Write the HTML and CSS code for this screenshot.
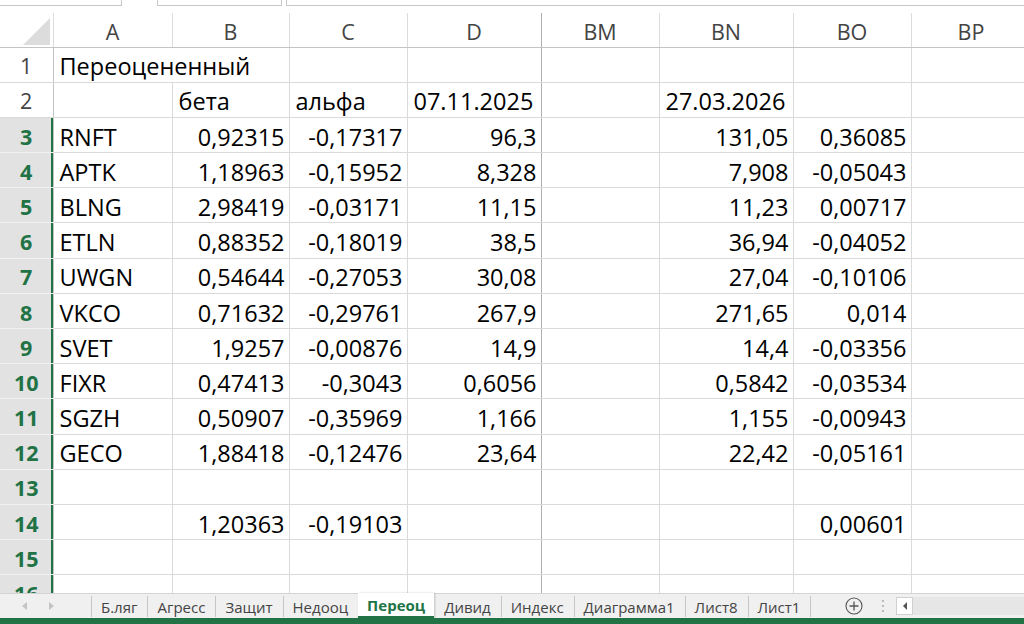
FILE: index.html
```html
<!DOCTYPE html>
<html lang="ru">
<head>
    <meta charset="UTF-8">
    <title>Переоц</title>
    <link rel="stylesheet" href="styles.css">
</head>
<body>
<div class="app">
    <div class="formula-strip">
        <div class="name-box"></div>
        <div class="fx-box"></div>
        <div class="formula-box"></div>
    </div>

    <div class="sheet">
        <table class="grid">
            <colgroup>
                <col class="w-hdr">
                <col class="w-a"><col class="w-b"><col class="w-c"><col class="w-d">
                <col class="w-bm"><col class="w-bn"><col class="w-bo"><col class="w-bp">
            </colgroup>
            <thead>
                <tr>
                    <th class="corner"><svg width="28" height="27" viewBox="0 0 28 27"><polygon points="27,0 27,27 0,27" fill="#dcdcdc"/></svg></th>
                    <th>A</th><th>B</th><th>C</th><th>D</th><th>BM</th><th>BN</th><th>BO</th><th>BP</th>
                </tr>
            </thead>
            <tbody>
                <tr><th>1</th><td class="ov">Переоцененный</td><td></td><td></td><td></td><td></td><td></td><td></td><td></td></tr>
                <tr><th>2</th><td></td><td>бета</td><td>альфа</td><td>07.11.2025</td><td></td><td>27.03.2026</td><td></td><td></td></tr>
                <tr><th class="sel">3</th><td>RNFT</td><td class="n">0,92315</td><td class="n">-0,17317</td><td class="n">96,3</td><td></td><td class="n">131,05</td><td class="n">0,36085</td><td></td></tr>
                <tr><th class="sel">4</th><td>APTK</td><td class="n">1,18963</td><td class="n">-0,15952</td><td class="n">8,328</td><td></td><td class="n">7,908</td><td class="n">-0,05043</td><td></td></tr>
                <tr><th class="sel">5</th><td>BLNG</td><td class="n">2,98419</td><td class="n">-0,03171</td><td class="n">11,15</td><td></td><td class="n">11,23</td><td class="n">0,00717</td><td></td></tr>
                <tr><th class="sel">6</th><td>ETLN</td><td class="n">0,88352</td><td class="n">-0,18019</td><td class="n">38,5</td><td></td><td class="n">36,94</td><td class="n">-0,04052</td><td></td></tr>
                <tr><th class="sel">7</th><td>UWGN</td><td class="n">0,54644</td><td class="n">-0,27053</td><td class="n">30,08</td><td></td><td class="n">27,04</td><td class="n">-0,10106</td><td></td></tr>
                <tr><th class="sel">8</th><td>VKCO</td><td class="n">0,71632</td><td class="n">-0,29761</td><td class="n">267,9</td><td></td><td class="n">271,65</td><td class="n">0,014</td><td></td></tr>
                <tr><th class="sel">9</th><td>SVET</td><td class="n">1,9257</td><td class="n">-0,00876</td><td class="n">14,9</td><td></td><td class="n">14,4</td><td class="n">-0,03356</td><td></td></tr>
                <tr><th class="sel">10</th><td>FIXR</td><td class="n">0,47413</td><td class="n">-0,3043</td><td class="n">0,6056</td><td></td><td class="n">0,5842</td><td class="n">-0,03534</td><td></td></tr>
                <tr><th class="sel">11</th><td>SGZH</td><td class="n">0,50907</td><td class="n">-0,35969</td><td class="n">1,166</td><td></td><td class="n">1,155</td><td class="n">-0,00943</td><td></td></tr>
                <tr><th class="sel">12</th><td>GECO</td><td class="n">1,88418</td><td class="n">-0,12476</td><td class="n">23,64</td><td></td><td class="n">22,42</td><td class="n">-0,05161</td><td></td></tr>
                <tr><th class="sel">13</th><td></td><td></td><td></td><td></td><td></td><td></td><td></td><td></td></tr>
                <tr><th class="sel">14</th><td></td><td class="n">1,20363</td><td class="n">-0,19103</td><td></td><td></td><td></td><td class="n">0,00601</td><td></td></tr>
                <tr><th class="sel">15</th><td></td><td></td><td></td><td></td><td></td><td></td><td></td><td></td></tr>
                <tr><th class="sel">16</th><td></td><td></td><td></td><td></td><td></td><td></td><td></td><td></td></tr>
            </tbody>
        </table>
    </div>

    <div class="tabbar">
        <div class="tab-nav">
            <svg width="8" height="10" viewBox="0 0 8 10"><polygon points="6,1 6,9 1,5" fill="#c4c4c4"/></svg>
            <svg width="8" height="10" viewBox="0 0 8 10"><polygon points="2,1 2,9 7,5" fill="#c4c4c4"/></svg>
        </div>
        <div class="tabs">
            <div class="tab">Б.ляг</div>
            <div class="tab">Агресс</div>
            <div class="tab">Защит</div>
            <div class="tab before-active">Недооц</div>
            <div class="tab active">Переоц</div>
            <div class="tab">Дивид</div>
            <div class="tab">Индекс</div>
            <div class="tab">Диаграмма1</div>
            <div class="tab">Лист8</div>
            <div class="tab">Лист1</div>
        </div>
        <div class="add-sheet">
            <svg width="18" height="18" viewBox="0 0 18 18">
                <circle cx="9" cy="9" r="8" fill="none" stroke="#555" stroke-width="1.1"/>
                <path d="M9 4.5v9M4.5 9h9" stroke="#555" stroke-width="1.3"/>
            </svg>
        </div>
        <div class="split-dots">
            <svg width="4" height="14" viewBox="0 0 4 14">
                <circle cx="2" cy="2" r="1" fill="#aaa"/>
                <circle cx="2" cy="7" r="1" fill="#aaa"/>
                <circle cx="2" cy="12" r="1" fill="#aaa"/>
            </svg>
        </div>
        <div class="hscroll">
            <div class="scroll-btn">
                <svg width="6" height="8" viewBox="0 0 6 8"><polygon points="5,0 5,8 1,4" fill="#555"/></svg>
            </div>
            <div class="scroll-track"></div>
        </div>
    </div>

    <div class="statusbar"></div>
</div>
</body>
</html>
```

FILE: styles.css
```css
* {
    margin: 0;
    padding: 0;
    box-sizing: border-box;
}

body {
    background: white;
    font-family: 'Open Sans', 'Noto Sans', sans-serif;
    overflow: hidden;
}

.app {
    width: 1024px;
    height: 624px;
    display: flex;
    flex-direction: column;
}

/* formula bar remnants at the top */
.formula-strip {
    height: 13px;
    display: flex;
    align-items: flex-start;
}

.formula-strip div {
    height: 6px;
    border: 1px solid #c8c8c8;
    border-top: none;
}

.name-box {
    width: 122px;
    border-left: none !important;
}

.fx-box {
    width: 125px;
    margin-left: 35px;
}

.formula-box {
    flex: 1;
    margin-left: 4px;
    border-right: none !important;
}

/* sheet grid */
.sheet {
    flex: 1;
    overflow: hidden;
}

.grid {
    table-layout: fixed;
    border-collapse: collapse;
    width: 1031px;
}

.w-hdr { width: 53px; }
.w-a { width: 119px; }
.w-b { width: 117px; }
.w-c { width: 118px; }
.w-d { width: 134px; }
.w-bm { width: 118px; }
.w-bn { width: 134px; }
.w-bo { width: 118px; }
.w-bp { width: 120px; }

.grid thead th {
    height: 34px;
    font-size: 21.5px;
    font-weight: normal;
    color: #444;
    text-align: center;
    vertical-align: bottom;
    padding-bottom: 1px;
    border-right: 1px solid #dcdcdc;
    border-bottom: 1px solid #c4c4c4;
}

.grid thead th.corner {
    text-align: right;
    padding: 0 2px 2px 0;
    line-height: 0;
}

.grid tbody tr {
    height: 35.2px;
}

.grid td {
    font-size: 23.5px;
    line-height: 1;
    color: #000;
    white-space: nowrap;
    vertical-align: bottom;
    padding: 0 5px 3px 6px;
    border: 1px solid #dadada;
}

.grid td.n {
    text-align: right;
    padding-right: 4px;
}

.grid td.ov {
    overflow: visible;
    border-right-style: hidden;
}

.grid tbody th {
    font-size: 21.5px;
    font-weight: normal;
    line-height: 1;
    color: #444;
    text-align: center;
    vertical-align: bottom;
    padding-bottom: 5px;
    border-bottom: 1px solid #dadada;
    border-right: 1px solid #c4c4c4;
}

/* selected rows */
.grid tbody th.sel {
    background: #e2e2e2;
    color: #217346;
    font-weight: bold;
    border-bottom-color: #f2f2f2;
    box-shadow: inset -2px 0 0 #217346;
}

/* frozen panes split after column D */
.grid th:nth-child(5),
.grid td:nth-child(5) {
    border-right: 1px solid #b0b0b0;
}

/* sheet tabs */
.tabbar {
    height: 25px;
    background: #f0f0f0;
    border-top: 1px solid #d4d4d4;
    display: flex;
    align-items: stretch;
}

.tab-nav {
    width: 91px;
    display: flex;
    align-items: center;
    gap: 18px;
    padding-left: 21px;
}

.tabs {
    display: flex;
    border-left: 1px solid #c6c6c6;
    margin: 2px 0 1px;
}

.tab {
    font-size: 15px;
    color: #444;
    padding: 0 10px 0 9px;
    display: flex;
    align-items: center;
    border-right: 1px solid #c6c6c6;
}

.tab.before-active {
    border-right: none;
}

.tab.active {
    background: white;
    color: #217346;
    font-weight: bold;
    margin: -3px 1px -1px 0;
    padding: 0 9px;
    border-bottom: 2px solid #217346;
    border-right: none;
    box-shadow: 1px 0 2px rgba(0, 0, 0, 0.2);
}

.add-sheet {
    margin-left: 34px;
    display: flex;
    align-items: center;
}

.split-dots {
    margin-left: 18px;
    display: flex;
    align-items: center;
}

.hscroll {
    flex: 1;
    display: flex;
    align-items: center;
    margin-left: 11px;
}

.scroll-btn {
    width: 17px;
    height: 18px;
    background: white;
    border: 1px solid #d0d0d0;
    display: flex;
    align-items: center;
    justify-content: center;
}

.scroll-track {
    flex: 1;
    height: 18px;
    background: #e6e6e6;
}

.statusbar {
    height: 6px;
    background: #217346;
}
```
